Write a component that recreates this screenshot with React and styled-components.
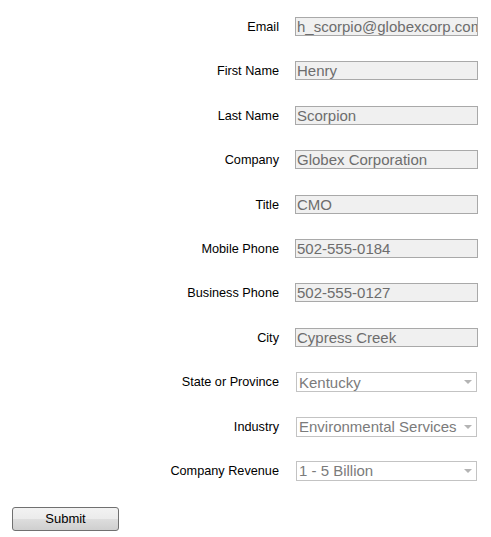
import React from "react";
import styled, { createGlobalStyle } from "styled-components";

const Global = createGlobalStyle`
  body {
    margin: 0;
    background: #fff;
    font-family: Arial, "Liberation Sans", sans-serif;
  }
`;

const Form = styled.form`
  padding: 17px 0 0 12px;
`;

const Grid = styled.div`
  display: grid;
  grid-template-columns: 267px 183px;
  column-gap: 16px;
  row-gap: 24.4px;
`;

const Label = styled.label`
  height: 20px;
  display: flex;
  align-items: center;
  justify-content: flex-end;
  font-size: 12.7px;
  color: #000;
  white-space: nowrap;
`;

const Input = styled.input`
  box-sizing: border-box;
  width: 183px;
  height: 19px;
  margin: 0;
  padding: 0 0 0 1px;
  border: 1px solid #a9a9a9;
  background: #f0f0f0;
  color: #6d6d6d;
  font-family: Arial, "Liberation Sans", sans-serif;
  font-size: 15px;
  line-height: 17px;
  outline: none;
`;

const SelectWrap = styled.div`
  position: relative;
  width: 181px;
  height: 20px;
  margin-left: 1px;

  &::after {
    content: "";
    position: absolute;
    right: 5px;
    top: 8px;
    border-left: 4px solid transparent;
    border-right: 4px solid transparent;
    border-top: 4px solid #b4b4b4;
    pointer-events: none;
  }
`;

const Select = styled.select`
  appearance: none;
  box-sizing: border-box;
  width: 100%;
  height: 20px;
  margin: 0;
  padding: 0 16px 0 2px;
  border: 1px solid #c3c3c3;
  border-radius: 0;
  background: #fff;
  color: #7b7b7b;
  font-family: Arial, "Liberation Sans", sans-serif;
  font-size: 15px;
  outline: none;
`;

const Button = styled.button`
  margin-top: 26px;
  width: 107px;
  height: 24px;
  border: 1px solid #707070;
  border-radius: 3px;
  background: linear-gradient(#f2f2f2 0%, #ebebeb 50%, #dddddd 51%, #cfcfcf 100%);
  font-family: Arial, "Liberation Sans", sans-serif;
  font-size: 13px;
  color: #000;
  padding: 0;
`;

const fields = [
  ["Email", "h_scorpio@globexcorp.com"],
  ["First Name", "Henry"],
  ["Last Name", "Scorpion"],
  ["Company", "Globex Corporation"],
  ["Title", "CMO"],
  ["Mobile Phone", "502-555-0184"],
  ["Business Phone", "502-555-0127"],
  ["City", "Cypress Creek"],
];

const selects = [
  ["State or Province", "Kentucky"],
  ["Industry", "Environmental Services"],
  ["Company Revenue", "1 - 5 Billion"],
];

export default function App() {
  return (
    <>
      <Global />
      <Form onSubmit={(e) => e.preventDefault()}>
        <Grid>
          {fields.map(([label, value]) => (
            <React.Fragment key={label}>
              <Label>{label}</Label>
              <Input defaultValue={value} readOnly />
            </React.Fragment>
          ))}
          {selects.map(([label, value]) => (
            <React.Fragment key={label}>
              <Label>{label}</Label>
              <SelectWrap>
                <Select defaultValue={value}>
                  <option>{value}</option>
                </Select>
              </SelectWrap>
            </React.Fragment>
          ))}
        </Grid>
        <Button type="submit">Submit</Button>
      </Form>
    </>
  );
}
